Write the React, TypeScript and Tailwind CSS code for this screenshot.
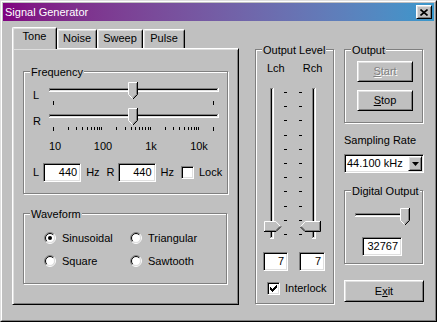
import React from "react";

const raised =
  "border border-t-white border-l-white border-r-black border-b-black shadow-[inset_1px_1px_0_#dfdfdf,inset_-1px_-1px_0_#808080]";
const sunken =
  "border border-t-[#808080] border-l-[#808080] border-r-white border-b-white shadow-[inset_1px_1px_0_#000,inset_-1px_-1px_0_#dfdfdf]";

// sunken slider channel drawn as stacked rects
function Channel({ x, y, w, h }: { x: number; y: number; w: number; h: number }) {
  return (
    <g shapeRendering="crispEdges">
      <rect x={x} y={y} width={w} height={h} fill="#fff" />
      <rect x={x} y={y} width={w - 1} height={h - 1} fill="#808080" />
      <rect x={x + 1} y={y + 1} width={w - 2} height={h - 2} fill="#dfdfdf" />
      <rect x={x + 1} y={y + 1} width={w - 3} height={1} fill="#000" />
      <rect x={x + 1} y={y + 1} width={1} height={h - 3} fill="#000" />
    </g>
  );
}

function ThumbDown({ x, y }: { x: number; y: number }) {
  return (
    <g transform={`translate(${x},${y})`}>
      <path d="M0 0H10V12L5 17L0 12Z" fill="#c0c0c0" />
      <path d="M0.5 12.5V0.5H9" stroke="#fff" fill="none" />
      <path d="M0.5 12.5L4.5 16.5" stroke="#fff" fill="none" />
      <path d="M9.5 0V12.5L5 17" stroke="#000" fill="none" />
      <path d="M8.5 1V12.2L5 15.7" stroke="#808080" fill="none" />
    </g>
  );
}

function ThumbRight({ x, y }: { x: number; y: number }) {
  return (
    <g transform={`translate(${x},${y})`}>
      <path d="M0 0H12L17 5.5L12 11H0Z" fill="#c0c0c0" />
      <path d="M0.5 10V0.5H11.8L16 5" stroke="#fff" fill="none" />
      <path d="M0 10.5H12L17 5.5" stroke="#000" fill="none" />
      <path d="M1 9.5H11.6L15.6 5.5" stroke="#808080" fill="none" />
    </g>
  );
}

function ThumbLeft({ x, y }: { x: number; y: number }) {
  return (
    <g transform={`translate(${x},${y})`}>
      <path d="M0 5.5L5 0H21V11H5Z" fill="#c0c0c0" />
      <path d="M0.8 5.5L5.3 0.5H20" stroke="#fff" fill="none" />
      <path d="M20.5 0V10.5H5L0.5 6" stroke="#000" fill="none" />
      <path d="M19.5 1V9.5H5.4L1.6 5.5" stroke="#808080" fill="none" />
    </g>
  );
}

function FreqSlider({ logTicks }: { logTicks: boolean }) {
  const x0 = 6;
  const span = 160;
  const full = Math.log10(2000);
  const ticks: { x: number; long: boolean }[] = [];
  if (logTicks) {
    for (let d = 0; d < 3; d++)
      for (let m = 1; m <= 9; m++)
        ticks.push({ x: x0 + (span * (d + Math.log10(m))) / full, long: d === 0 && m === 1 });
    ticks.push({ x: x0 + (span * 3) / full, long: false });
  } else {
    ticks.push({ x: x0, long: true });
  }
  ticks.push({ x: x0 + span, long: true });
  const thumb = x0 + (span * Math.log10(44)) / full - 5;
  return (
    <svg width={173} height={26} className="shrink-0">
      <Channel x={2} y={6} w={170} h={4} />
      <g shapeRendering="crispEdges">
        {ticks.map((t, i) => (
          <rect key={i} x={Math.round(t.x)} y={19} width={1} height={t.long ? 4 : 3} fill="#000" />
        ))}
      </g>
      <ThumbDown x={Math.round(thumb)} y={0} />
    </svg>
  );
}

function VSlider({ side }: { side: "left" | "right" }) {
  const tickYs = Array.from({ length: 11 }, (_, i) => Math.round(6 + 14.2 * i));
  return (
    <svg width={25} height={153} className="shrink-0">
      {side === "left" ? (
        <>
          <Channel x={6} y={2} w={4} h={151} />
          <g shapeRendering="crispEdges">
            {tickYs.map((y) => (
              <rect key={y} x={20} y={y} width={3} height={1} fill="#000" />
            ))}
          </g>
          <ThumbRight x={0} y={135} />
        </>
      ) : (
        <>
          <Channel x={15} y={2} w={4} h={151} />
          <g shapeRendering="crispEdges">
            {tickYs.map((y) => (
              <rect key={y} x={2} y={y} width={3} height={1} fill="#000" />
            ))}
          </g>
          <ThumbLeft x={3} y={135} />
        </>
      )}
    </svg>
  );
}

function GroupBox({
  label,
  className = "",
  children,
}: {
  label: string;
  className?: string;
  children?: React.ReactNode;
}) {
  return (
    <div className={`relative border border-[#808080] shadow-[inset_1px_1px_0_#fff,1px_1px_0_#fff] ${className}`}>
      <span className="absolute -top-[6px] left-[6px] bg-[#c0c0c0] px-[1px] whitespace-nowrap">{label}</span>
      {children}
    </div>
  );
}

function Edit({ value, className = "" }: { value: string; className?: string }) {
  return (
    <div className={`${sunken} bg-white h-[19px] flex items-center justify-end pr-[3px] shrink-0 ${className}`}>
      {value}
    </div>
  );
}

function Button({ children, className = "" }: { children: React.ReactNode; className?: string }) {
  return (
    <div className={`${raised} bg-[#c0c0c0] flex items-center justify-center ${className}`}>{children}</div>
  );
}

const CHECK = [
  [6, 0], [5, 1], [6, 1], [0, 2], [4, 2], [5, 2], [6, 2], [0, 3], [1, 3], [3, 3], [4, 3], [5, 3],
  [0, 4], [1, 4], [2, 4], [3, 4], [4, 4], [1, 5], [2, 5], [3, 5], [2, 6],
];

function CheckBox({ checked = false, className = "" }: { checked?: boolean; className?: string }) {
  return (
    <div className={`${sunken} bg-white w-[13px] h-[13px] relative shrink-0 ${className}`}>
      {checked && (
        <svg width={7} height={7} className="absolute left-[2px] top-[2px]" shapeRendering="crispEdges">
          {CHECK.map(([x, y]) => (
            <rect key={`${x}-${y}`} x={x} y={y} width={1} height={1} fill="#000" />
          ))}
        </svg>
      )}
    </div>
  );
}

function Radio({ checked = false, label }: { checked?: boolean; label: string }) {
  const arc = (r: number, c1: string, c2: string) => {
    const d = r * 0.7071;
    const bl = `${6 - d} ${6 + d}`;
    const tr = `${6 + d} ${6 - d}`;
    return (
      <>
        <path d={`M${bl}A${r} ${r} 0 0 1 ${tr}`} stroke={c1} fill="none" />
        <path d={`M${tr}A${r} ${r} 0 0 1 ${bl}`} stroke={c2} fill="none" />
      </>
    );
  };
  return (
    <div className="flex items-center h-[16px] gap-[6px]">
      <svg width={12} height={12} className="shrink-0">
        <circle cx={6} cy={6} r={4.5} fill="#fff" />
        {arc(5.5, "#808080", "#fff")}
        {arc(4.5, "#000", "#dfdfdf")}
        {checked && <circle cx={6} cy={6} r={2} fill="#000" />}
      </svg>
      <span>{label}</span>
    </div>
  );
}

function Tab({ label, w, selected = false }: { label: string; w: string; selected?: boolean }) {
  return (
    <div
      className={`${w} ${
        selected ? "h-[22px] -mb-[1px] relative z-10" : "h-[19px]"
      } bg-[#c0c0c0] border-l border-t border-r border-l-white border-t-white border-r-black rounded-t-[2px] shadow-[inset_1px_1px_0_#dfdfdf,inset_-1px_0_0_#808080] text-center pt-[2px] shrink-0`}
    >
      {label}
    </div>
  );
}

export default function App() {
  return (
    <div className="w-[437px] h-[322px] font-['Liberation_Sans',Arial,sans-serif] text-[11px] leading-[13px] text-black">
      <div className="w-full h-full border border-t-[#dfdfdf] border-l-[#dfdfdf] border-r-black border-b-black">
        <div className="w-full h-full border border-t-white border-l-white border-r-[#808080] border-b-[#808080] bg-[#c0c0c0] p-[1px] flex flex-col">
          {/* title bar */}
          <div className="h-[18px] shrink-0 bg-linear-to-r from-[#800080] to-[#3898cc] flex items-center justify-between px-[2px]">
            <span className="text-white">Signal Generator</span>
            <Button className="w-[16px] h-[14px]">
              <svg width={8} height={7}>
                <path d="M0.5 0.5L7.5 6.5M7.5 0.5L0.5 6.5" stroke="#000" strokeWidth={1.6} />
              </svg>
            </Button>
          </div>

          <div className="flex items-start pl-[9px] pt-[6px]">
            {/* tab control */}
            <div className="w-[227px] shrink-0">
              <div className="flex items-end h-[21px]">
                <Tab label="Tone" w="w-[45px]" selected />
                <Tab label="Noise" w="w-[40px]" />
                <Tab label="Sweep" w="w-[46px]" />
                <Tab label="Pulse" w="w-[42px]" />
              </div>
              <div className="h-[257px] border border-t-white border-l-white border-r-black border-b-black shadow-[inset_1px_1px_0_#dfdfdf,inset_-1px_-1px_0_#808080] pl-[10px] pt-[22px]">
                <GroupBox label="Frequency" className="w-[205px] h-[123px] pt-[10px]">
                  <div className="flex items-center h-[26px] pl-[9px]">
                    <span className="w-[14px]">L</span>
                    <FreqSlider logTicks={false} />
                  </div>
                  <div className="flex items-center h-[26px] pl-[9px]">
                    <span className="w-[14px]">R</span>
                    <FreqSlider logTicks />
                  </div>
                  <div className="flex mt-[6px] h-[13px] pl-[7px]">
                    <span className="w-[48px] text-center">10</span>
                    <span className="w-[48px] text-center">100</span>
                    <span className="w-[48px] text-center">1k</span>
                    <span className="w-[48px] text-center">10k</span>
                  </div>
                  <div className="flex items-center mt-[10px] h-[19px] pl-[9px]">
                    <span>L</span>
                    <Edit value="440" className="ml-[4px] w-[38px]" />
                    <span className="ml-[5px]">Hz</span>
                    <span className="ml-[7px]">R</span>
                    <Edit value="440" className="ml-[3px] w-[38px]" />
                    <span className="ml-[5px]">Hz</span>
                    <CheckBox className="ml-[7px]" />
                    <span className="ml-[5px]">Lock</span>
                  </div>
                </GroupBox>

                <GroupBox label="Waveform" className="mt-[19px] w-[204px] h-[71px] pt-[16px]">
                  <div className="grid grid-cols-[86px_auto] gap-y-[7px] pl-[20px]">
                    <Radio checked label="Sinusoidal" />
                    <Radio label="Triangular" />
                    <Radio label="Square" />
                    <Radio label="Sawtooth" />
                  </div>
                </GroupBox>
              </div>
            </div>

            {/* output level */}
            <GroupBox label="Output Level" className="ml-[16px] mt-[22px] w-[79px] h-[255px] pt-[12px] shrink-0">
              <div className="flex h-[13px]">
                <span className="ml-[11px]">Lch</span>
                <span className="ml-[18px]">Rch</span>
              </div>
              <div className="flex mt-[11px] pl-[8px] gap-[8px]">
                <VSlider side="left" />
                <VSlider side="right" />
              </div>
              <div className="flex mt-[13px] pl-[7px]">
                <Edit value="7" className="w-[25px]" />
                <Edit value="7" className="ml-[11px] w-[26px]" />
              </div>
              <div className="flex items-center mt-[11px] pl-[11px]">
                <CheckBox checked />
                <span className="ml-[5px]">Interlock</span>
              </div>
            </GroupBox>

            {/* right column */}
            <div className="ml-[10px] mt-[22px] w-[80px] shrink-0">
              <GroupBox label="Output" className="w-[79px] h-[74px] pt-[11px] pl-[12px]">
                <Button className="w-[56px] h-[21px]">
                  <span className="text-[#808080] [text-shadow:1px_1px_0_#fff]">
                    <u>S</u>tart
                  </span>
                </Button>
                <Button className="w-[56px] h-[21px] mt-[8px]">
                  <span>
                    <u>S</u>top
                  </span>
                </Button>
              </GroupBox>

              <div className="mt-[11px] whitespace-nowrap">Sampling Rate</div>
              <div className={`${sunken} bg-white mt-[7px] w-[80px] h-[19px] p-[1px] flex items-center`}>
                <span className="flex-1 pl-[1px]">44.100 kHz</span>
                <Button className="w-[14px] h-full">
                  <svg width={7} height={4}>
                    <path d="M0 0H7L3.5 4Z" fill="#000" />
                  </svg>
                </Button>
              </div>

              <GroupBox label="Digital Output" className="mt-[17px] w-[79px] h-[74px] pt-[17px]">
                <svg width={57} height={18} className="ml-[8px] block">
                  <Channel x={2} y={5} w={53} h={4} />
                  <ThumbDown x={47} y={0} />
                </svg>
                <Edit value="32767" className="ml-[17px] mt-[11px] w-[40px]" />
              </GroupBox>

              <Button className="mt-[16px] w-[80px] h-[22px]">
                <span>
                  E<u>x</u>it
                </span>
              </Button>
            </div>
          </div>
        </div>
      </div>
    </div>
  );
}
